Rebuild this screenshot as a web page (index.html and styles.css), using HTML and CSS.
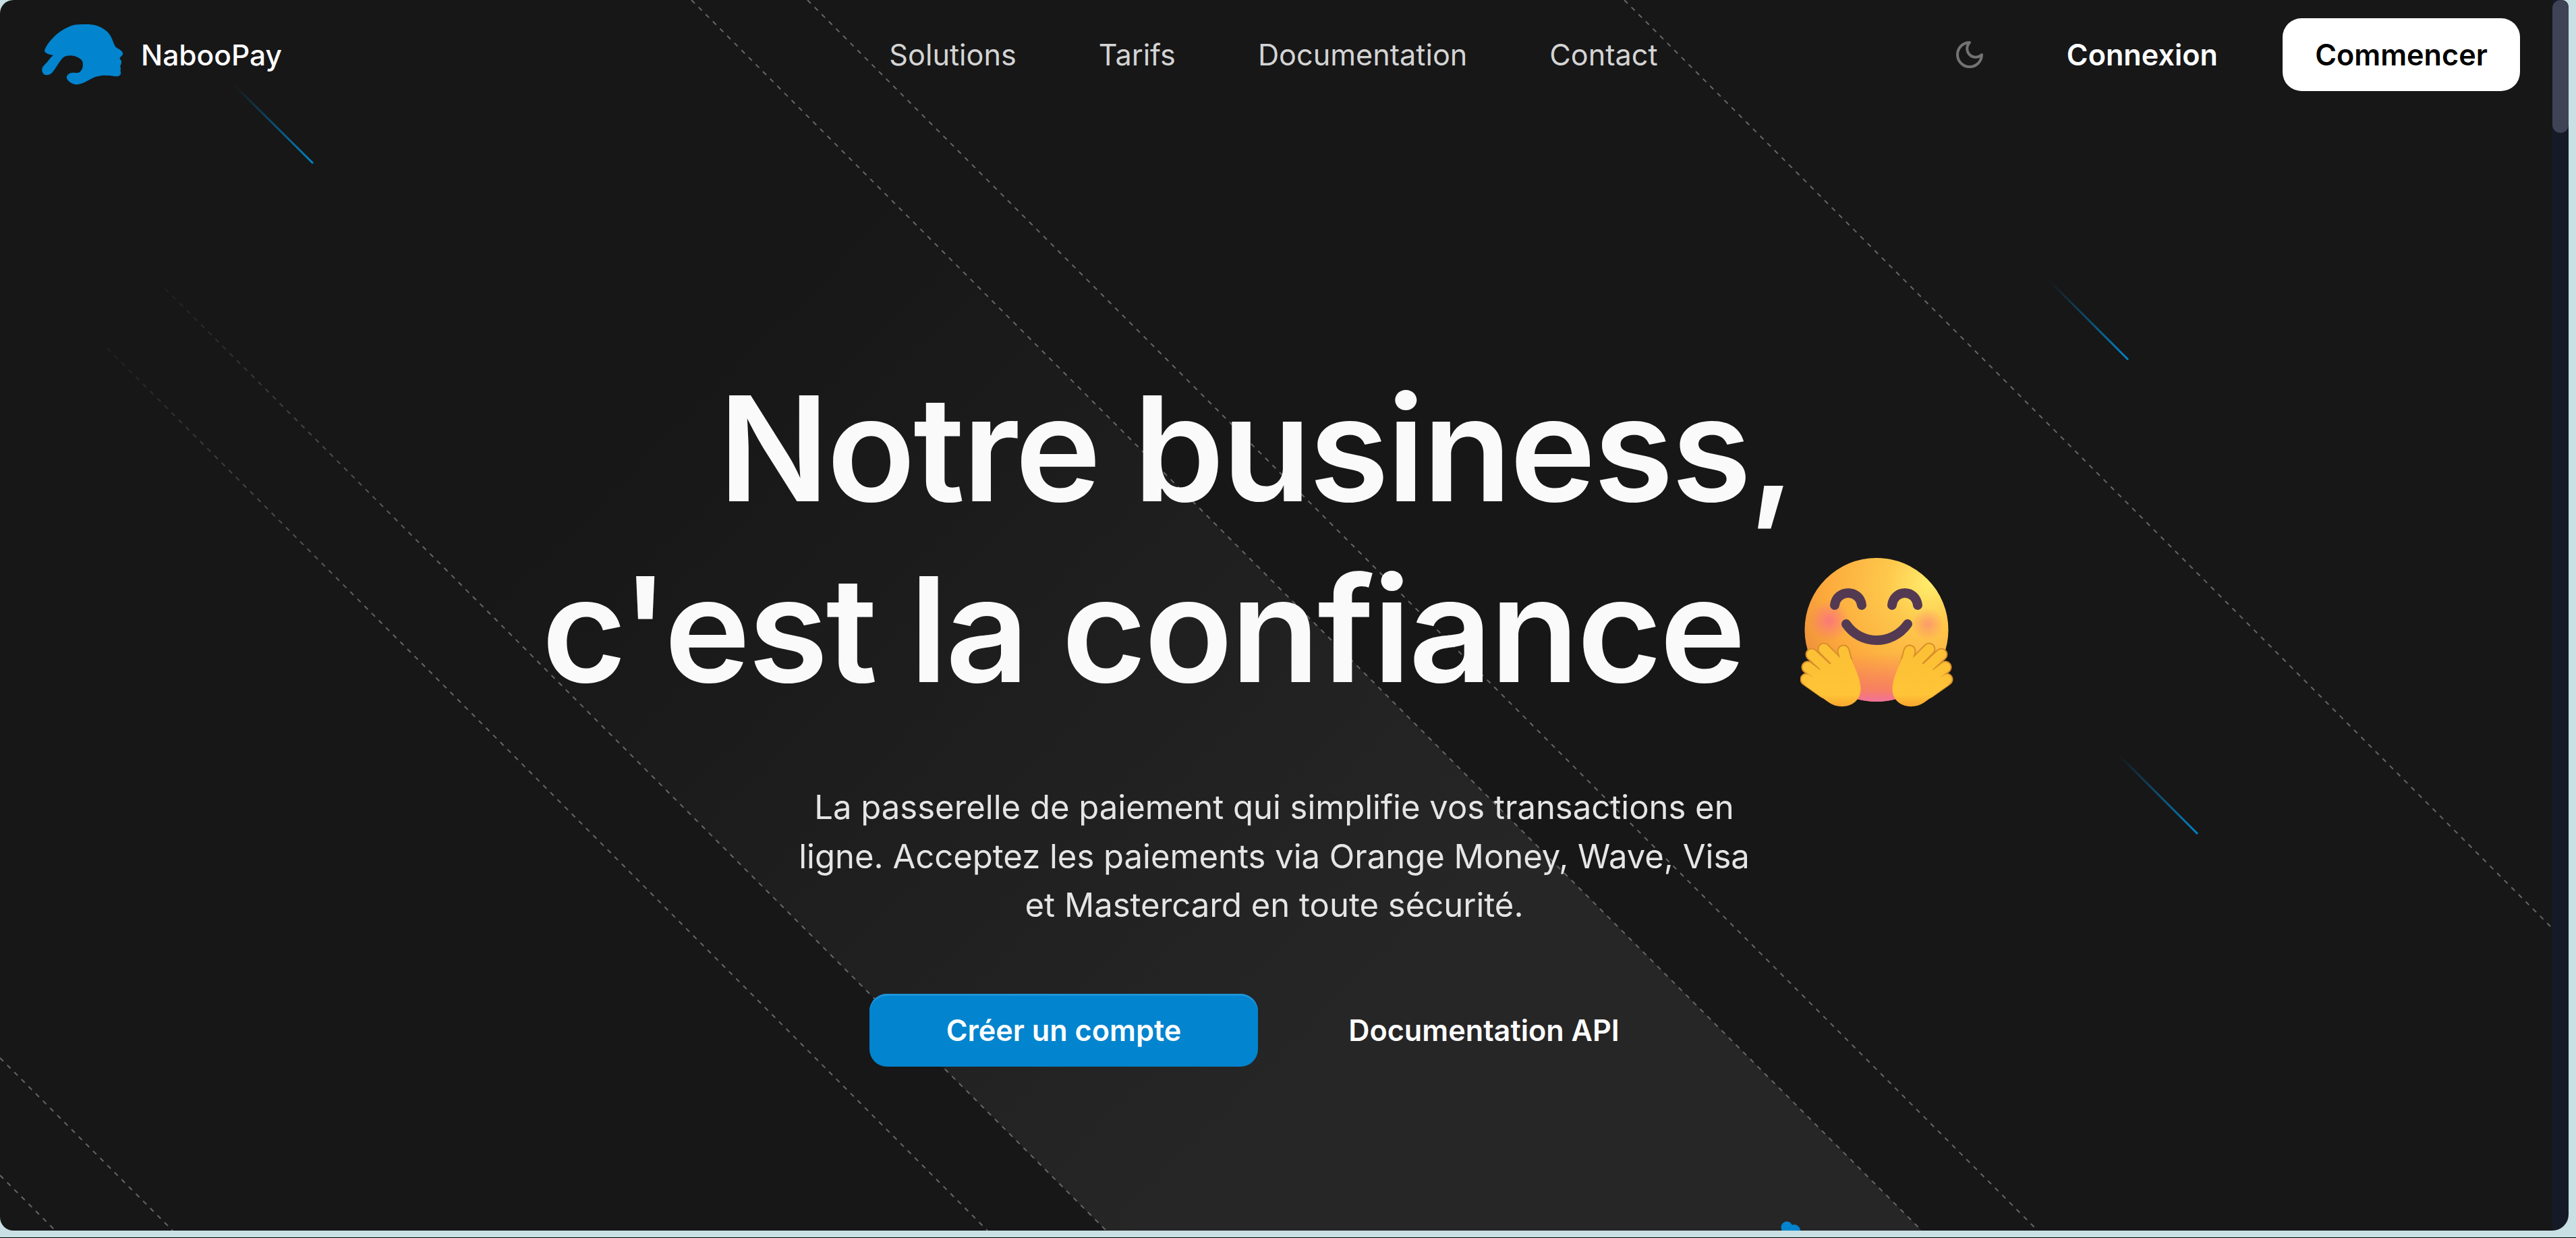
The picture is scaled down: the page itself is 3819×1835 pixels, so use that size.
FILE: index.html
```html
<!DOCTYPE html>
<html lang="fr">
<head>
<meta charset="utf-8">
<title>NabooPay</title>
<link rel="stylesheet" href="styles.css">
</head>
<body>
<div class="window">
  <main class="page">
    <svg class="backdrop" width="3784" height="1824" viewBox="0 0 3784 1824" aria-hidden="true">
      <defs>
        <linearGradient id="band" gradientUnits="userSpaceOnUse" x1="800" y1="800" x2="1750" y2="1750">
          <stop offset="0" stop-color="#262626" stop-opacity="0"/>
          <stop offset="1" stop-color="#262626"/>
        </linearGradient>
        <linearGradient id="fadeA" gradientUnits="userSpaceOnUse" x1="245" y1="428" x2="645" y2="828">
          <stop offset="0" stop-color="#666" stop-opacity=".12"/>
          <stop offset="1" stop-color="#666"/>
        </linearGradient>
        <linearGradient id="fadeB" gradientUnits="userSpaceOnUse" x1="159" y1="516" x2="559" y2="916">
          <stop offset="0" stop-color="#666" stop-opacity=".12"/>
          <stop offset="1" stop-color="#666"/>
        </linearGradient>
        <linearGradient id="beamA" gradientUnits="userSpaceOnUse" x1="346" y1="125" x2="464" y2="242">
          <stop offset="0" stop-color="#0284c7" stop-opacity="0"/>
          <stop offset="1" stop-color="#0284c7"/>
        </linearGradient>
        <linearGradient id="beamB" gradientUnits="userSpaceOnUse" x1="3038" y1="416" x2="3155" y2="533">
          <stop offset="0" stop-color="#0284c7" stop-opacity="0"/>
          <stop offset="1" stop-color="#0284c7"/>
        </linearGradient>
        <linearGradient id="beamC" gradientUnits="userSpaceOnUse" x1="3140" y1="1118" x2="3258" y2="1236">
          <stop offset="0" stop-color="#0284c7" stop-opacity="0"/>
          <stop offset="1" stop-color="#0284c7"/>
        </linearGradient>
      </defs>
      <polygon fill="url(#band)" points="1025,0 2849,1824 1640,1824 0,184 0,0"/>
      <g class="dash">
        <line x1="1025" y1="0" x2="2849" y2="1824"/>
        <line x1="1197" y1="0" x2="3021" y2="1824"/>
        <line x1="2408" y1="0" x2="3784" y2="1376"/>
        <line class="fade-a" x1="245" y1="428" x2="1640" y2="1824"/>
        <line class="fade-b" x1="159" y1="516" x2="1464" y2="1824"/>
        <line x1="0" y1="1568" x2="256" y2="1824"/>
        <line x1="0" y1="1742" x2="82" y2="1824"/>
      </g>
      <line class="beam beam-a" x1="346" y1="125" x2="464" y2="242"/>
      <line class="beam beam-b" x1="3038" y1="416" x2="3155" y2="533"/>
      <line class="beam beam-c" x1="3140" y1="1118" x2="3258" y2="1236"/>
      <g class="blob">
        <circle cx="2649" cy="1819" r="8.5"/>
        <circle cx="2660" cy="1824" r="9"/>
        <circle cx="2646" cy="1826" r="5"/>
      </g>
    </svg>

    <header class="nav">
      <a class="brand" href="#">
        <svg class="logo" width="122" height="90" viewBox="0 0 122 90" aria-hidden="true">
          <path fill="#0284ce" d="M1 71C2 76 10 77 15 72C20 67 25 56 32 49C38 45 50 45 59 53C62 57 62 66 56 71C52 73 47 71 44 72C38 73 35 78 38 82C42 88 50 90 54 89C60 88 64 86 69 83C75 80 80 77 84 77C90 75 96 76 101 76C107 77 113 78 115 76C118 74 117 72 117 71C116 68 118 65 116 62C118 59 118 57 118 54C116 52 115 51 116 49C119 47 121 44 120 42C118 39 116 38 115 37C110 35 108 32 107 29C105 25 104 20 101 16C98 11 95 9 90 6C84 2 76 0 67 0C58 0 50 0 44 2C36 5 29 9 23 14C16 20 9 28 6 34C4 38 3 41 6 42C9 45 14 45 17 46C14 48 11 52 8 56C5 59 2 62 1 64C0 67 0 69 1 71Z"/>
        </svg>
        <span class="brand-name">NabooPay</span>
      </a>
      <nav class="links">
        <a href="#">Solutions</a>
        <a href="#">Tarifs</a>
        <a href="#">Documentation</a>
        <a href="#">Contact</a>
      </nav>
      <div class="actions">
        <svg class="moon" width="48" height="48" viewBox="0 0 24 24" fill="none" aria-hidden="true">
          <path d="M12 3a6 6 0 0 0 9 9 9 9 0 1 1-9-9Z"/>
        </svg>
        <a class="login" href="#">Connexion</a>
        <a class="start" href="#">Commencer</a>
      </div>
    </header>

    <section class="hero">
      <h1 class="title">
        <span class="title-line">Notre business,</span>
        <span class="title-line">c'est la confiance <svg class="emoji" width="228" height="222" viewBox="0 0 228 222" role="img" aria-label="hugging face">
            <defs>
              <radialGradient id="face" gradientUnits="userSpaceOnUse" cx="190" cy="38" r="240">
                <stop offset="0" stop-color="#ffec6c"/>
                <stop offset=".25" stop-color="#fec94c"/>
                <stop offset=".65" stop-color="#fca93c"/>
                <stop offset="1" stop-color="#e5803a"/>
              </radialGradient>
              <linearGradient id="chin" x1="0" y1="0" x2="0" y2="1">
                <stop offset=".66" stop-color="#f77c66" stop-opacity="0"/>
                <stop offset=".92" stop-color="#f77c66" stop-opacity=".9"/>
                <stop offset="1" stop-color="#f0709e"/>
              </linearGradient>
              <radialGradient id="cheek">
                <stop offset="0" stop-color="#fb7280" stop-opacity=".9"/>
                <stop offset="1" stop-color="#fb7280" stop-opacity="0"/>
              </radialGradient>
              <linearGradient id="palm" x1="0" y1="0" x2="0" y2="1">
                <stop offset="0" stop-color="#fdc136"/>
                <stop offset=".75" stop-color="#ffc437"/>
                <stop offset="1" stop-color="#f8a52e"/>
              </linearGradient>
              <g id="hug-fingers">
                <line x1="9" y1="180" x2="36" y2="199"/>
                <line x1="11" y1="162" x2="42" y2="185"/>
                <line x1="17" y1="143" x2="46" y2="170"/>
                <line x1="35" y1="135" x2="60" y2="160"/>
                <line x1="64" y1="138" x2="74" y2="175"/>
              </g>
              <g id="hug-hand">
                <use href="#hug-fingers" class="finger-shade"/>
                <use href="#hug-fingers" class="finger-top"/>
                <path fill="url(#palm)" d="M6 188 42 214C62 228 94 218 89 188C87 174 80 162 76 150L50 154 26 168Z"/>
              </g>
            </defs>
            <circle cx="113" cy="106.500" r="106.500" fill="url(#face)"/>
            <circle cx="113" cy="106.500" r="106.500" fill="url(#chin)"/>
            <circle cx="43" cy="93" r="30" fill="url(#cheek)"/>
            <circle class="cheek-right" cx="189" cy="98" r="24" fill="url(#cheek)"/>
            <g class="smile">
              <path d="M51 70C54 46 88 46 91 70"/>
              <path d="M136 70C139 46 171 46 174 70"/>
              <path d="M68 98C90 130 136 130 159 98"/>
            </g>
            <use href="#hug-hand"/>
            <use href="#hug-hand" transform="matrix(-1 0 0 1 226 0)"/>
          </svg></span>
      </h1>
      <p class="lead">La passerelle de paiement qui simplifie vos transactions en ligne. Acceptez les paiements via Orange Money, Wave, Visa et Mastercard en toute sécurité.</p>
      <div class="cta">
        <a class="cta-primary" href="#">Créer un compte</a>
        <a class="cta-secondary" href="#">Documentation API</a>
      </div>
    </section>
  </main>
  <div class="scrollbar"><div class="thumb"></div></div>
</div>
<div class="bottom-edge"></div>
</body>
</html>
```
FILE: styles.css
```css
* { box-sizing: border-box; }
html, body { height: 100%; }
body {
  margin: 0;
  background: #c8e0e4;
  font-family: Inter, "Liberation Sans", sans-serif;
  overflow: hidden;
}
a { color: inherit; text-decoration: none; }

.window {
  display: flex;
  width: 3808px;
  height: 1824px;
  border-radius: 20px 10px 24px 20px;
  overflow: hidden;
}
.bottom-edge { height: 1px; margin-top: 10px; background: #000; }
.page {
  position: relative;
  flex: 1;
  min-width: 0;
  background: #171717;
}
.scrollbar { flex: 0 0 24px; background: #141a26; }
.thumb { height: 197px; border-radius: 12px; background: #3e4356; }

.backdrop { position: absolute; inset: 0; }
.dash line { stroke: #666; stroke-width: 2; stroke-dasharray: 7 8; }
.dash .fade-a { stroke: url(#fadeA); }
.dash .fade-b { stroke: url(#fadeB); }
.beam { stroke-width: 3; }
.beam-a { stroke: url(#beamA); }
.beam-b { stroke: url(#beamB); }
.beam-c { stroke: url(#beamC); }
.blob circle { fill: #0284ce; }

.nav {
  position: relative;
  display: grid;
  grid-template-columns: 1fr auto 1fr;
  align-items: center;
  height: 162px;
  padding: 0 48px 0 62px;
}
.brand { display: flex; align-items: center; gap: 25px; }
.logo { display: block; }
.brand-name { font-size: 42.5px; font-weight: 500; color: #fff; }
.links { display: flex; gap: 122px; margin-right: 22px; font-size: 43.2px; color: #d4d4d4; }
.actions { display: flex; align-items: center; justify-content: flex-end; }
.moon { margin-right: 120px; }
.moon path { stroke: #737373; stroke-width: 2; stroke-linecap: round; stroke-linejoin: round; }
.login { margin-right: 96px; font-size: 43.2px; font-weight: 600; color: #fff; }
.start {
  display: flex;
  align-items: center;
  justify-content: center;
  width: 352px;
  height: 108px;
  border-radius: 28px;
  background: #fff;
  color: #000;
  font-size: 43.2px;
  font-weight: 600;
}

.hero {
  position: relative;
  display: flex;
  flex-direction: column;
  align-items: center;
  padding-top: 369px;
}
.title {
  margin: 0;
  padding-right: 60px;
  color: #fafafa;
  font-size: 216px;
  font-weight: 600;
  letter-spacing: -3.3px;
  line-height: 268px;
  text-align: center;
}
.title-line { display: block; white-space: nowrap; }
.emoji { margin: 0 24px 0 33px; vertical-align: -38px; }
.smile path { fill: none; stroke: #533a52; stroke-width: 14; stroke-linecap: round; }
.cheek-right { opacity: .6; }
.finger-shade { stroke: #d98f2a; stroke-width: 19; stroke-linecap: round; }
.finger-top { stroke: #fdc136; stroke-width: 15; stroke-linecap: round; }

.lead {
  width: 1440px;
  margin: 94px 6px 0 0;
  color: #e5e5e5;
  font-size: 49px;
  line-height: 72.5px;
  text-align: center;
}
.cta { display: flex; gap: 40px; margin-top: 94px; }
.cta-primary, .cta-secondary {
  display: flex;
  align-items: center;
  justify-content: center;
  height: 108px;
  border-radius: 26px;
  color: #fff;
  font-size: 43.2px;
  font-weight: 600;
}
.cta-primary {
  width: 576px;
  background: #0284ce;
  box-shadow: inset 0 3px 0 #1d94d9;
}
.cta-secondary { width: 590px; }
```
